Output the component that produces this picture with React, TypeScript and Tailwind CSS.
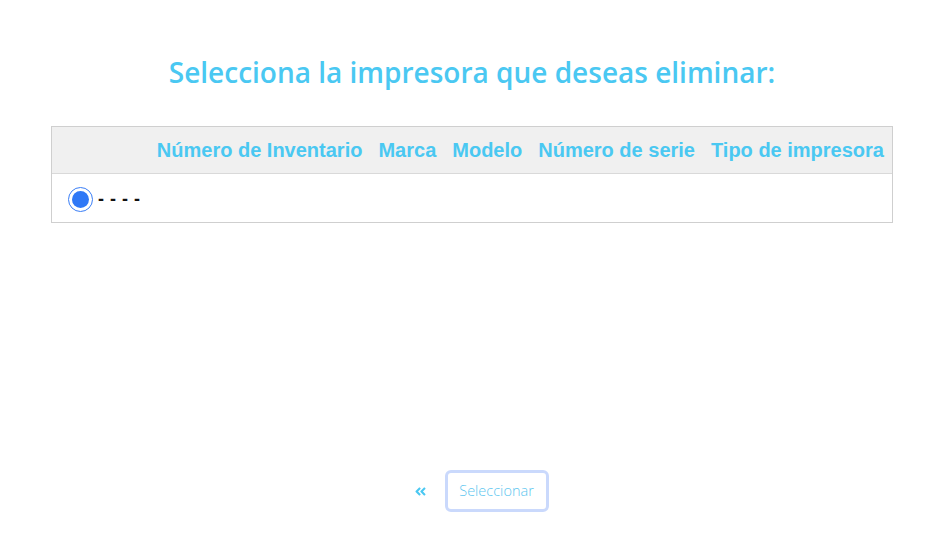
import React, { useState } from 'react';
import { FaAngleDoubleLeft } from 'react-icons/fa';

const columns = ['Número de Inventario', 'Marca', 'Modelo', 'Número de serie', 'Tipo de impresora'];

const App: React.FC = () => {
  const [selected, setSelected] = useState(true);

  return (
    <div className="w-[948px] h-[541px] bg-white flex flex-col items-center pr-[4px]">
      <h1 className="mt-[52px] text-[28px] leading-[40px] font-semibold text-[#4ac8f2] font-['Open_Sans',sans-serif]">
        Selecciona la impresora que deseas eliminar:
      </h1>

      <div className="mt-[34px] w-[842px] border border-[#cfcfcf] font-['Liberation_Sans',Arial,sans-serif]">
        <div className="h-[47px] bg-[#f0f0f0] border-b border-[#d9d9d9] flex items-center justify-end gap-[16px] pr-[8px]">
          {columns.map((col) => (
            <span key={col} className="text-[20px] font-bold text-[#4ac8f2] whitespace-nowrap">
              {col}
            </span>
          ))}
        </div>
        <div className="h-[48px] flex items-center pl-[16px] pt-[2px]">
          <button
            onClick={() => setSelected(!selected)}
            className="w-[25px] h-[25px] rounded-full border border-[#3a7ef6] flex items-center justify-center"
          >
            {selected && <span className="w-[17px] h-[17px] rounded-full bg-[#2f78f6]" />}
          </button>
          <span className="ml-[5px] text-[18px] font-bold text-[#111] tracking-[0.5px]">- - - -</span>
        </div>
      </div>

      <div className="mt-[247px] ml-[18px] flex items-center gap-[18px]">
        <FaAngleDoubleLeft className="w-[13px] h-[13px] text-[#4ac8f2]" />
        <button className="w-[104px] h-[42px] rounded-[6px] border-[3px] border-[#cad9fc] text-[14.5px] text-[#5cc6ef] font-['Open_Sans',sans-serif] font-light">
          Seleccionar
        </button>
      </div>
    </div>
  );
};

export default App;
